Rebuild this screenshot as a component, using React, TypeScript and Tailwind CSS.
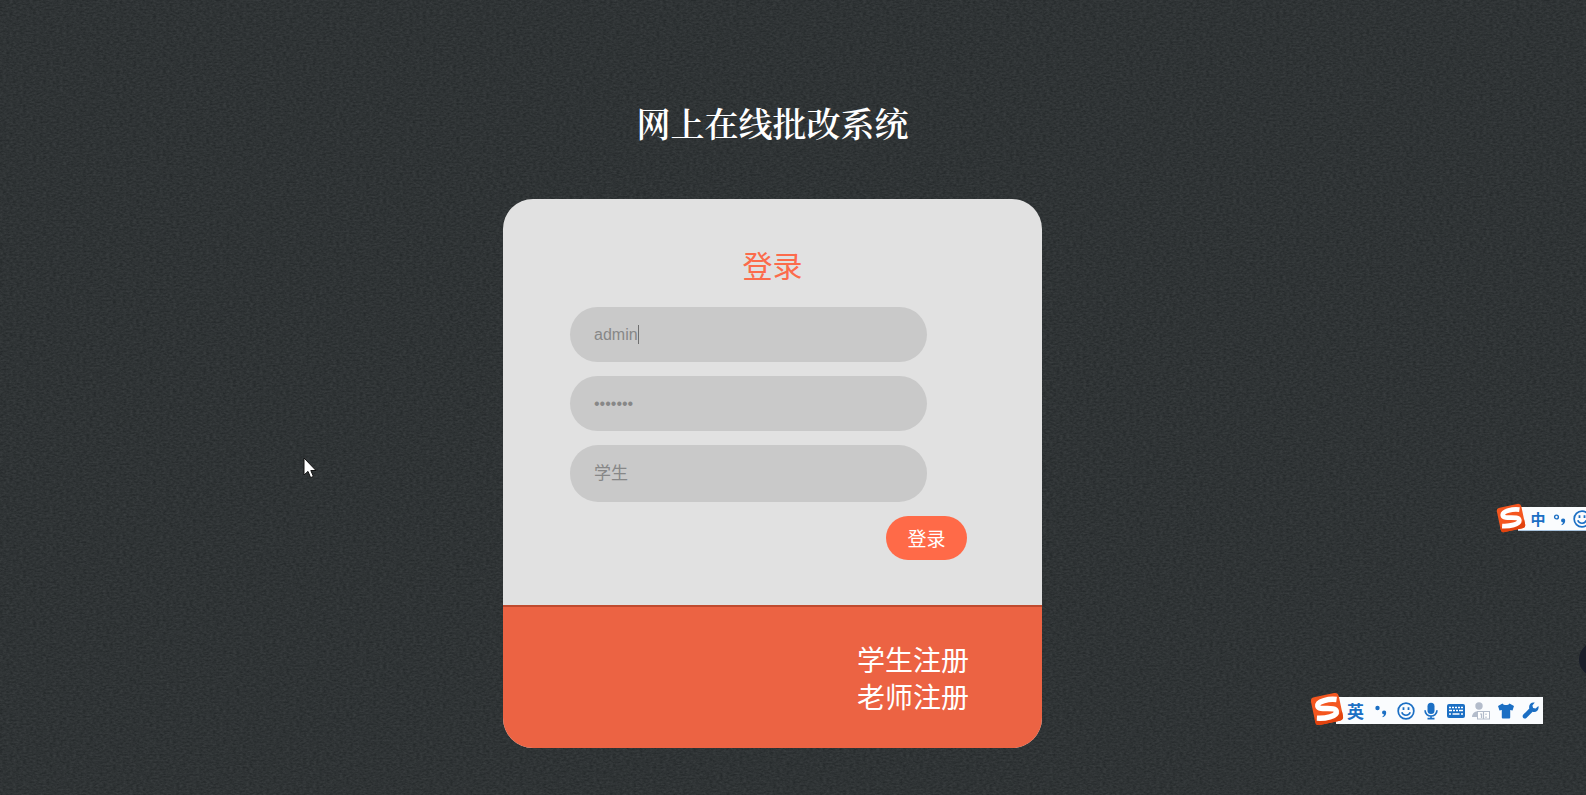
import React, { useState } from "react";

const BLUE = "#1b6fc4";

function Texture() {
  return (
    <svg className="absolute inset-0 h-full w-full" aria-hidden="true">
      <filter id="grain" x="0" y="0" width="100%" height="100%" colorInterpolationFilters="sRGB">
        <feTurbulence type="fractalNoise" baseFrequency="0.3 0.55" numOctaves="3" seed="4" />
        <feColorMatrix values="0.11 0 0 0 0.130  0.11 0 0 0 0.147  0.11 0 0 0 0.153  0 0 0 0 1" />
      </filter>
      <rect width="100%" height="100%" filter="url(#grain)" />
    </svg>
  );
}

function SogouLogo({ className }: { className: string }) {
  return (
    <svg viewBox="1 1 30 30" className={className} aria-hidden="true">
      <g transform="rotate(-12 16 16)">
        <rect x="3.500" y="3.500" width="25" height="25" rx="3.500" fill="#f4561f" />
        <path d="M3.500 22v3A3.500 3.500 0 0 0 7 28.500h18a3.500 3.500 0 0 0 3.500-3.500V20c-5 7-16 8-25 2z" fill="#e2430f" />
        <path
          d="M26 9.600C20 7.400 8.600 7.200 8.600 11.800c0 4.600 15 3 15 7.800 0 4.600-11.200 4.400-18 2.400"
          fill="none"
          stroke="#fff"
          strokeWidth="4.800"
        />
      </g>
    </svg>
  );
}

function Punctuation({ hollow = false }: { hollow?: boolean }) {
  return (
    <svg viewBox="0 0 16 16" className="h-4 w-4" fill={BLUE} aria-hidden="true">
      {hollow ? (
        <circle cx="4.500" cy="6" r="1.900" fill="none" stroke={BLUE} strokeWidth="1.400" />
      ) : (
        <circle cx="4.500" cy="5" r="2.200" />
      )}
      <path d="M11 7.500a2.100 2.100 0 0 1 2.200 2.300c0 2.200-1.300 3.800-3.400 4.500l-.4-.9c1-.5 1.600-1 1.700-1.900a2 2 0 1 1-.1-4z" />
    </svg>
  );
}

function Smiley() {
  return (
    <svg viewBox="0 0 20 20" className="h-[18px] w-[18px] shrink-0" fill="none" stroke={BLUE} aria-hidden="true">
      <circle cx="10" cy="10" r="8.700" strokeWidth="1.900" />
      <path d="M7.200 5.800v3M12.800 5.800v3" strokeWidth="2" />
      <path d="M5.300 11.500c1.400 4.300 8 4.300 9.400 0" strokeWidth="1.700" />
    </svg>
  );
}

function Mic() {
  return (
    <svg viewBox="0 0 16 20" className="h-[18px] w-[14px]" aria-hidden="true">
      <rect x="4" y="0.500" width="8" height="13" rx="4" fill={BLUE} />
      <path d="M1.200 9c0 9 13.600 9 13.600 0M8 15v3M4 18.800h8" fill="none" stroke={BLUE} strokeWidth="1.900" />
    </svg>
  );
}

function Keyboard() {
  return (
    <svg viewBox="0 0 18 14" className="h-[14px] w-[18px]" aria-hidden="true">
      <rect width="18" height="14" rx="2" fill={BLUE} />
      <path
        d="M2 3.500h2m1 0h2m1 0h2m1 0h2m1 0h2M2 6.500h3m1 0h2m1 0h2m1 0h4M2 10h2m1.500 0h7m1.500 0h2"
        stroke="#fff"
        strokeWidth="1.700"
      />
    </svg>
  );
}

function UserCard() {
  return (
    <svg viewBox="0 0 18 18" className="h-[18px] w-[18px]" aria-hidden="true">
      <circle cx="7" cy="4" r="3.700" fill="#b3bccb" />
      <path d="M0 15c0-8 14-8 14 0z" fill="#b3bccb" />
      <rect x="5.500" y="9.500" width="12" height="7.500" fill="#fff" stroke="#b3bccb" />
      <path d="M8 12h1.500v4M14 11.500v1.500M14 14.500v1.500M11.500 10v7" fill="none" stroke="#b3bccb" strokeWidth="1.200" />
    </svg>
  );
}

function Shirt() {
  return (
    <svg viewBox="0 0 16 16" className="h-4 w-4" fill={BLUE} aria-hidden="true">
      <path d="M4.500.5c1.200 2 5.800 2 7 0L16 3l-1.500 4.500-2.300-.6V14.500q0 1-1 1H4.800q-1 0-1-1V6.900l-2.300.6L0 3z" />
    </svg>
  );
}

function Wrench() {
  return (
    <svg viewBox="0 0 17 17" className="h-[17px] w-[17px]" fill={BLUE} aria-hidden="true">
      <path d="M12.800.6 10.400 3.400l.7 2.500 2.500.7 2.800-2.500c1 3.600-2 6.800-5.800 5.700L4.400 16c-1.900 1.800-5-1-3.300-3.200L7.300 6.500C6.300 2.800 9.300-.4 12.800.6z" />
    </svg>
  );
}

function Cell({ children }: { children: React.ReactNode }) {
  return <span className="flex w-[25px] shrink-0 items-center justify-center">{children}</span>;
}

function NarrowCell({ children }: { children: React.ReactNode }) {
  return <span className="flex w-[22px] shrink-0 items-center justify-center">{children}</span>;
}

const fieldClass =
  "block w-[357px] max-w-full appearance-none rounded-[28px] border-0 bg-[#c9c9c9] px-6 text-[#878787] outline-none font-['Liberation_Sans','Noto_Sans_CJK_SC',sans-serif]";

export default function App() {
  const [name, setName] = useState("admin");
  const [password, setPassword] = useState("1234567");

  return (
    <main className="relative min-h-screen overflow-hidden bg-[#2f3435] font-['Noto_Sans_CJK_SC',sans-serif]">
      <Texture />

      <div className="relative flex flex-col items-center pt-[99px] pr-[41px] pb-[47px]">
        <h1 className="mb-[52px] text-[34px] leading-[48px] font-semibold text-white font-['Noto_Serif_CJK_SC','Noto_Sans_CJK_SC',serif]">
          网上在线批改系统
        </h1>

        <section className="w-[539px] max-w-full overflow-hidden rounded-[30px] bg-[#e1e1e1]">
          <div className="pt-[46px] pr-[75px] pb-[45px] pl-[67px]">
            <h2 className="mb-6 pl-2 text-center text-[30px] leading-[38px] font-normal text-[#fc6b4b]">登录</h2>
            <form className="flex flex-col gap-[14px]" onSubmit={(e) => e.preventDefault()}>
              <div className="relative">
                <input
                  aria-label="用户名"
                  className={`${fieldClass} h-[55px] text-base`}
                  value={name}
                  onChange={(e) => setName(e.target.value)}
                />
                <span className="absolute top-[18px] left-[68px] h-[19px] w-px bg-[#6f6f6f]" />
              </div>
              <input
                type="password"
                aria-label="密码"
                className={`${fieldClass} h-[55px] text-base`}
                value={password}
                onChange={(e) => setPassword(e.target.value)}
              />
              <select aria-label="身份" className={`${fieldClass} h-[57px] text-[17px]`}>
                <option>学生</option>
                <option>老师</option>
              </select>
              <button type="submit" className="h-11 w-[81px] self-end rounded-[22px] bg-[#ff6a48] text-[19px] text-white">
                登录
              </button>
            </form>
          </div>

          <nav className="flex flex-col items-end border-t-2 border-[#bf4a2e] bg-[#ec6343] pt-[34px] pr-[73px] pb-[33px] text-[28px] leading-[37px] text-white">
            <a href="#student">学生注册</a>
            <a href="#teacher">老师注册</a>
          </nav>
        </section>
      </div>

      <svg viewBox="0 0 14 22" className="absolute top-[457px] left-[303px] h-[22px] w-[14px]" aria-hidden="true">
        <path d="M1 1v17l4-3.600 2.600 6.200 2.800-1.200L7.800 13.500H13z" fill="#fff" stroke="#111" />
      </svg>

      <div className="absolute top-[503px] right-0 flex w-[90px] overflow-hidden">
        <SogouLogo className="relative z-10 h-[30px] w-[30px] shrink-0" />
        <div className="-ml-2 mt-1 flex h-6 items-center border-b border-[#a9c4de] bg-[#fafcfe] pl-[9px]">
          <NarrowCell>
            <span className="text-[15px] leading-[22px] font-bold text-[#1b6fc4]">中</span>
          </NarrowCell>
          <NarrowCell>
            <Punctuation hollow />
          </NarrowCell>
          <NarrowCell>
            <Smiley />
          </NarrowCell>
        </div>
      </div>

      <div className="absolute top-[642px] -right-7 h-[35px] w-[35px] rounded-full bg-[#1a1e29]" />

      <div className="absolute top-[692px] right-[43px] flex">
        <SogouLogo className="relative z-10 h-[34px] w-[34px] shrink-0" />
        <div className="-ml-2 mt-[5px] flex h-[27px] items-center bg-[#fafcfe] pl-[7px]">
          <Cell>
            <span className="text-[17px] leading-6 font-bold text-[#1b6fc4]">英</span>
          </Cell>
          <Cell>
            <Punctuation />
          </Cell>
          <Cell>
            <Smiley />
          </Cell>
          <Cell>
            <Mic />
          </Cell>
          <Cell>
            <Keyboard />
          </Cell>
          <Cell>
            <UserCard />
          </Cell>
          <Cell>
            <Shirt />
          </Cell>
          <Cell>
            <Wrench />
          </Cell>
        </div>
      </div>
    </main>
  );
}
